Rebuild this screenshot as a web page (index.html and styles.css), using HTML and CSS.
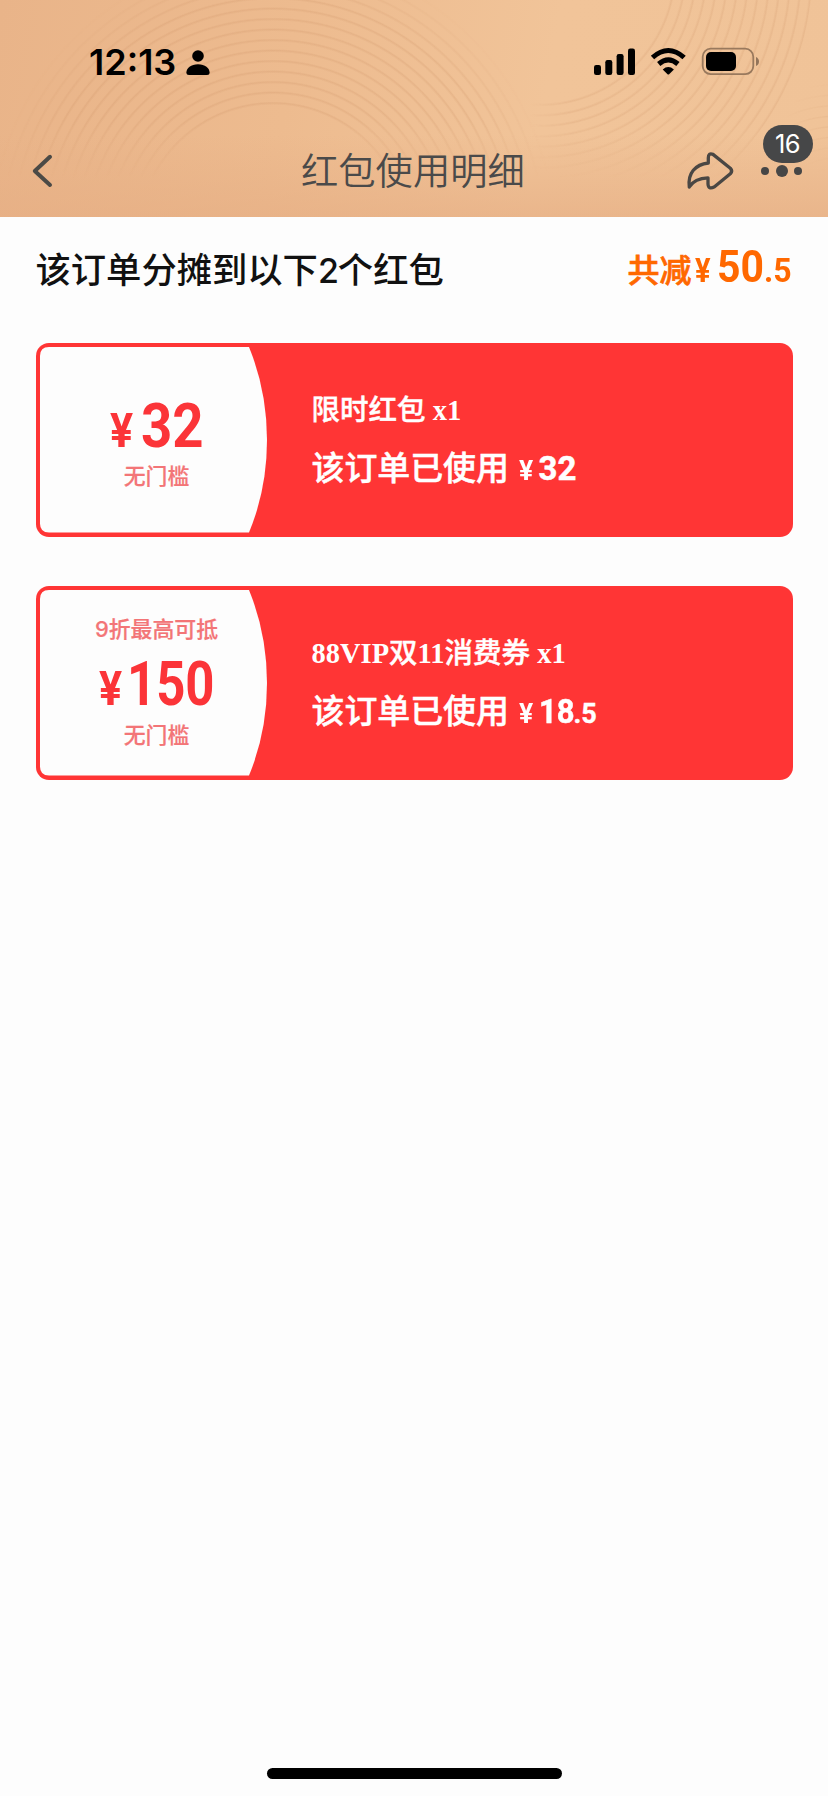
FILE: index.html
```html
<!DOCTYPE html>
<html lang="zh-CN">
<head>
<meta charset="utf-8">
<title>红包使用明细</title>
<link rel="stylesheet" href="styles.css">
</head>
<body>
<div class="page">
  <header class="header">
    <div class="rings"><div class="rings-left"></div><div class="rings-right"></div><div class="rings-edge"></div></div>
    <div class="status">
      <span class="time">12:13</span>
      <svg class="person" width="24" height="26" viewBox="0 0 24 26"><circle cx="12" cy="6" r="5.8"/><path d="M3 25Q.4 25 .4 22.500C.4 18 5 14.200 12 14.200S23.600 18 23.600 22.500Q23.600 25 21 25Z"/></svg>
      <svg class="signals" width="168" height="30" viewBox="592 46 168 30">
        <rect x="594" y="65" width="7" height="10" rx="2.200"/><rect x="605.300" y="60" width="7" height="15" rx="2.200"/><rect x="616.600" y="54" width="7" height="21" rx="2.200"/><rect x="628" y="48.500" width="7" height="26.500" rx="2.200"/>
        <g class="waves"><path d="M652.500 57.500Q668.300 43.500 684.100 57.500"/><path d="M658.700 64Q668.300 55.800 677.900 64"/></g>
        <path d="M662.700 69.500Q668.300 64.700 673.900 69.500L669.100 74.200Q668.300 75 667.500 74.200Z"/>
        <rect class="shell" x="702.700" y="48.700" width="50.600" height="25.400" rx="8"/>
        <rect x="706" y="52" width="30" height="19" rx="5"/>
        <path class="nub" d="M756 57Q759 58.500 759 61.500T756 66Z"/>
      </svg>
    </div>
    <nav class="nav">
      <svg class="back" width="24" height="36" viewBox="30 153 24 36"><path d="M50 156.800 34.800 171 50 185"/></svg>
      <h1 class="title">红包使用明细</h1>
      <svg class="share" width="52" height="44" viewBox="684 149 52 44"><path d="M689.300 187C687.500 173 695.500 164.500 708.300 163V158Q708.300 152.500 713 154.400L730.300 168.200Q733 171 730.300 173.800L714.500 186.800Q708.300 190 708 184V177.800C700 178 693 180.800 689.300 187Z"/></svg>
      <div class="more"><span class="dot"></span><span class="dot big"></span><span class="dot"></span><span class="badge">16</span></div>
    </nav>
  </header>
  <main class="content">
    <section class="summary">
      <h2 class="heading">该订单分摊到以下<span class="two">2</span>个红包</h2>
      <div class="total"><span class="label">共减</span><span class="n t-yen">¥</span><span class="n t-int">50</span><span class="n t-dec">.5</span></div>
    </section>
    <article class="coupon">
      <svg class="stub" width="232" height="186" viewBox="0 0 232 186"><path d="M9 0H209Q227 44 227 93T209 185.500H9Q0 185.500 0 176.500V9Q0 0 9 0Z"/></svg>
      <div class="value">
        <div class="limit"></div>
        <div class="amount"><span class="n a-yen">¥</span><span class="n a-32">32</span></div>
        <div class="rule">无门槛</div>
      </div>
      <div class="info">
        <div class="name"><span class="cn">限时红包</span> x1</div>
        <div class="used"><span class="used-label">该订单已使用</span><span class="n u-yen">¥</span><span class="n u-int">32</span></div>
      </div>
    </article>
    <article class="coupon">
      <svg class="stub" width="232" height="186" viewBox="0 0 232 186"><path d="M9 0H209Q227 44 227 93T209 185.500H9Q0 185.500 0 176.500V9Q0 0 9 0Z"/></svg>
      <div class="value">
        <div class="limit">9折最高可抵</div>
        <div class="amount second"><span class="n a-yen">¥</span><span class="n a-150">150</span></div>
        <div class="rule">无门槛</div>
      </div>
      <div class="info">
        <div class="name">88VIP<span class="cn">双</span>11<span class="cn">消费券</span> x1</div>
        <div class="used"><span class="used-label">该订单已使用</span><span class="n u-yen">¥</span><span class="n u-int u-18">18</span><span class="n u-dec">.5</span></div>
      </div>
    </article>
  </main>
  <div class="home"></div>
</div>
</body>
</html>
```
FILE: styles.css
```css
* { box-sizing: border-box; }
body { margin: 0; background: #fdfdfd; font-family: Inter, "Noto Sans CJK SC", sans-serif; }
.page { width: 828px; height: 1796px; display: flex; flex-direction: column; overflow: hidden; }
.header { position: relative; height: 217px; flex: none; background: linear-gradient(180deg, transparent 62%, rgba(230,174,132,.65) 100%), linear-gradient(100deg, #e9b489 0%, #edbb8f 35%, #f1c499 65%, #f0c398 100%); }
.rings, .rings div { position: absolute; inset: 0; }
.rings { -webkit-mask-image: linear-gradient(#000 55%, transparent 82%); mask-image: linear-gradient(#000 55%, transparent 82%); }
.rings .rings-left { background: repeating-radial-gradient(circle at 273px 238px, transparent 0 7px, rgba(209,151,107,.27) 9px, transparent 10.500px); -webkit-mask-image: radial-gradient(circle at 273px 238px, transparent 130px, #000 131px 240px, transparent 285px); mask-image: radial-gradient(circle at 273px 238px, transparent 130px, #000 131px 240px, transparent 285px); }
.rings .rings-right { background: repeating-radial-gradient(circle at 540px -30px, transparent 0 7px, rgba(209,151,107,.23) 9px, transparent 10.500px); -webkit-mask-image: radial-gradient(circle at 540px -30px, transparent 130px, #000 131px 272px, transparent 273px), linear-gradient(90deg, transparent 530px, #000 570px); mask-image: radial-gradient(circle at 540px -30px, transparent 130px, #000 131px 272px, transparent 273px), linear-gradient(90deg, transparent 530px, #000 570px); -webkit-mask-composite: source-in; mask-composite: intersect; }
.rings .rings-edge { background: repeating-radial-gradient(circle at 835px 220px, transparent 0 8px, rgba(209,151,107,.22) 9.300px, transparent 10.500px); -webkit-mask-image: radial-gradient(circle at 835px 130px, #000 0, transparent 50px); mask-image: radial-gradient(circle at 835px 130px, #000 0, transparent 50px); }

.status { position: relative; height: 124px; padding: 46px 68px 0 89px; display: flex; align-items: flex-start; }
.time { width: 97px; font-size: 36px; font-weight: 600; line-height: 32px; letter-spacing: 0; color: #000; }
.person { margin-top: 3.500px; }
.signals { margin-left: auto; }
.waves { fill: none; stroke: #000; stroke-width: 5; }
.shell { fill: none; stroke: #99795d; stroke-width: 1.800; }
.nub { fill: #92745a; }
.nav { position: relative; height: 93px; padding: 0 24px 0 30px; display: flex; align-items: flex-start; }
.back { margin-top: 29px; }
.back path { fill: none; stroke: #4b4a46; stroke-width: 4; stroke-linecap: round; stroke-linejoin: round; }
.title { margin: 19px 0 0 247px; width: 226px; white-space: nowrap; font: 350 37.300px/52px "Noto Sans CJK SC", sans-serif; color: #4a4a4a; }
.share { margin: 25px 0 0 156.500px; }
.share path { fill: none; stroke: #4a4744; stroke-width: 3.300; stroke-linejoin: round; }
.more { position: relative; margin: 40px 0 0 25.500px; width: 41px; height: 14px; display: flex; align-items: center; justify-content: space-between; }
.dot { width: 8px; height: 8px; border-radius: 50%; background: #464646; }
.dot.big { width: 12px; height: 12px; }
.badge { position: absolute; left: 1.500px; top: -39.500px; width: 50px; height: 38px; border-radius: 19px; background: #464748; color: #fff; font-size: 25.500px; line-height: 38px; text-align: center; letter-spacing: -.5px; }

.content { flex: 1; padding: 0 35.500px; }
.summary { height: 126px; padding-top: 26px; display: flex; justify-content: space-between; align-items: flex-start; }
.heading { margin: 0; font: 500 35.300px/50px "Noto Sans CJK SC", sans-serif; color: #111; white-space: nowrap; }
.two { font-family: Inter, sans-serif; font-weight: 500; font-size: 34px; letter-spacing: -1px; }
.n { display: inline-block; flex: none; font-family: Roboto, sans-serif; font-weight: 700; white-space: nowrap; transform-origin: left; }
.total { width: 165px; display: flex; align-items: baseline; color: #ff6800; font-size: 32px; line-height: 49px; }
.label { flex: none; width: 67px; white-space: nowrap; font-family: "Noto Sans CJK SC", sans-serif; font-weight: 500; -webkit-text-stroke: .7px #ff6800; }
.t-yen { width: 22.500px; font-size: 33px; transform: scaleX(.88); }
.t-int { width: 47px; font-size: 44px; transform: scaleX(.93); }
.t-dec { font-size: 34px; transform: scaleX(.94); }

.coupon { position: relative; width: 757px; height: 193.500px; margin-bottom: 49.500px; border-radius: 13px; background: #ff3535; display: flex; }
.stub { position: absolute; left: 4.500px; top: 4px; }
.stub path { fill: #fdfdfd; }
.value { position: relative; width: 243px; padding: 22px 1px 0 0; display: flex; flex-direction: column; align-items: center; font-family: Inter, "Noto Sans CJK SC", sans-serif; font-size: 21.900px; font-weight: 500; line-height: 32px; color: #f37577; -webkit-text-stroke: .2px; }
.limit { height: 32px; padding-top: 5px; white-space: nowrap; margin-left: 0; }
.amount { height: 64px; margin-top: -3px; margin-bottom: 2px; display: flex; align-items: baseline; width: 94px; line-height: 64px; color: #fb3438; -webkit-text-stroke: 0; }
.amount.second { width: 115px; margin-top: 12px; margin-bottom: 3px; }
.a-yen { width: 31px; font-size: 49px; transform: scaleX(.88); }
.a-32 { width: 62px; font-size: 62px; transform: scaleX(.88); }
.a-150 { width: 85px; font-size: 62px; transform: scaleX(.82); }
.amount.second .a-yen { width: 28px; }
.info { position: relative; padding: 48px 0 0 33px; color: #fff; }
.name { height: 40px; margin-top: -3px; font: 700 28.500px/40px "Liberation Serif", "Noto Sans CJK SC", sans-serif; }
.cn { font-family: "Noto Sans CJK SC", sans-serif; font-weight: 500; -webkit-text-stroke: .4px #fff; }
.used { margin-top: 14px; height: 48px; display: flex; align-items: baseline; line-height: 48px; }
.used-label { width: 207px; font: 500 32.900px/48px "Noto Sans CJK SC", sans-serif; -webkit-text-stroke: .5px #fff; }
.u-yen { width: 20px; font-size: 27px; transform: scaleX(.98); }
.u-int { font-size: 33px; -webkit-text-stroke: .5px #fff; }
.u-18 { width: 35px; transform: scaleX(.94); }
.u-dec { font-size: 27px; -webkit-text-stroke: .4px #fff; }
.home { flex: none; width: 295px; height: 11px; border-radius: 6px; background: #000; margin: 0 0 17px 267px; }
```
